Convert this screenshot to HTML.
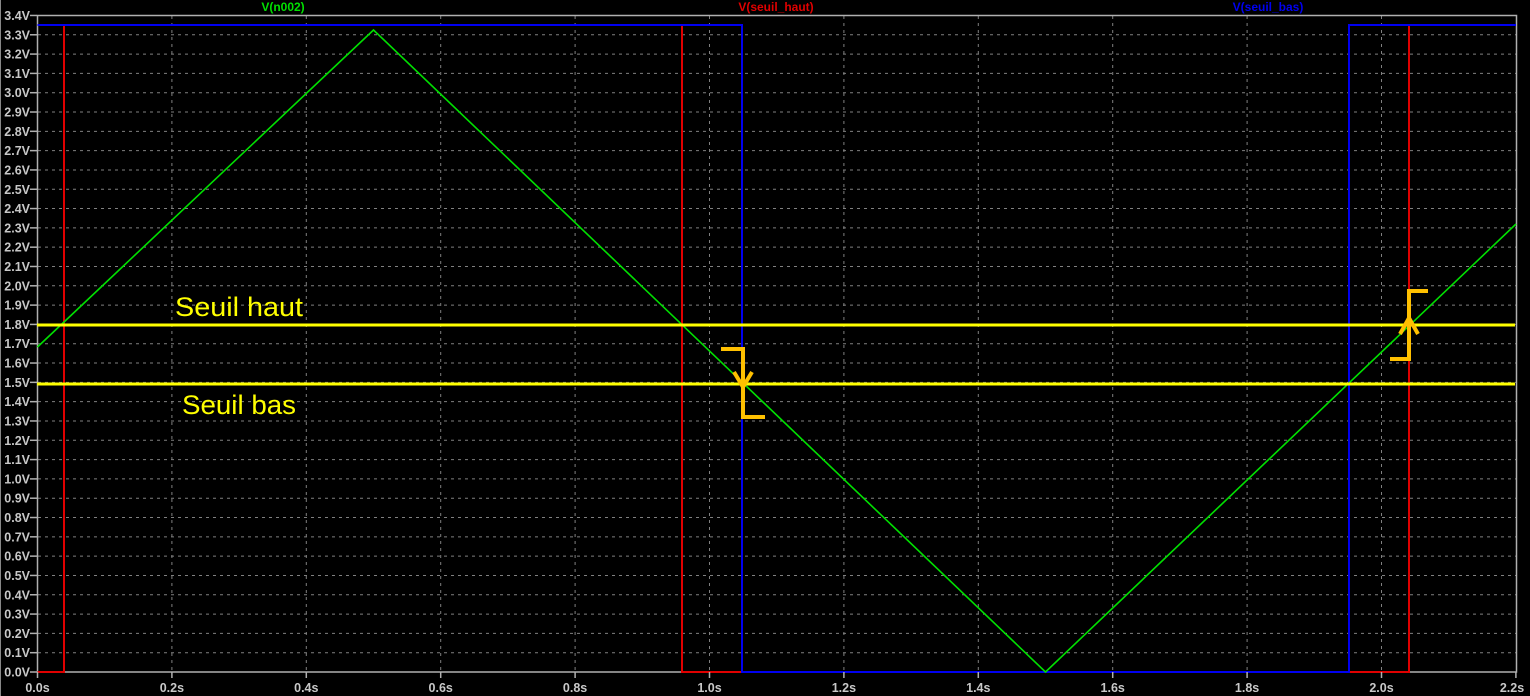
<!DOCTYPE html>
<html><head><meta charset="utf-8"><style>
html,body{margin:0;padding:0;background:#000;width:1530px;height:696px;overflow:hidden}
svg{display:block}
text{font-family:"Liberation Sans",Arial,sans-serif}
</style></head><body>
<svg width="1530" height="696" xmlns="http://www.w3.org/2000/svg">
<rect width="1530" height="696" fill="#000"/>
<line x1="0.5" y1="0" x2="0.5" y2="696" stroke="#888" stroke-width="1"/>
<g stroke="#808080" stroke-width="1" stroke-dasharray="3,4" fill="none" id="grid"></g>
<g id="ylab" font-size="12.5" font-weight="bold" fill="#c8c8c8" text-anchor="end"></g>
<g id="xlab" font-size="12.5" font-weight="bold" fill="#c8c8c8" text-anchor="middle"></g>
<rect x="37.5" y="15.5" width="1479" height="656.5" fill="none" stroke="#b0b0b0" stroke-width="1.5"/>
<text x="283" y="11" font-size="12" font-weight="bold" fill="#00e000" text-anchor="middle">V(n002)</text>
<text x="776" y="11" font-size="12" font-weight="bold" fill="#e00000" text-anchor="middle">V(seuil_haut)</text>
<text x="1268" y="11" font-size="12" font-weight="bold" fill="#0000f0" text-anchor="middle">V(seuil_bas)</text>
<path d="M37.5,672 H64 V25 H682 V672 H1409 V25 H1516" fill="none" stroke="#e00000" stroke-width="2"/>
<path d="M37.5,25 H742 V672 H1349 V25 H1516" fill="none" stroke="#0000f0" stroke-width="2"/>
<path d="M37.5,347 L373.5,30 L1045.5,672 L1516,224" fill="none" stroke="#00e000" stroke-width="1.6"/>
<line x1="37" y1="325" x2="1515" y2="325" stroke="#ffff00" stroke-width="3"/>
<line x1="37" y1="384" x2="1515" y2="384" stroke="#ffff00" stroke-width="3"/>
<text x="175" y="316" font-size="27" fill="#ffff00" textLength="128" lengthAdjust="spacingAndGlyphs">Seuil haut</text>
<text x="182" y="414" font-size="27" fill="#ffff00" textLength="114" lengthAdjust="spacingAndGlyphs">Seuil bas</text>
<g fill="none" stroke="#ffc000" stroke-width="4">
<path d="M721,349 H743 V417 H765"/>
<path d="M734,372 L743,387 L752,372"/>
<path d="M1428,291 H1409 V359 H1390"/>
<path d="M1400,334 L1409,318 L1418,334"/>
</g>
</svg>
<script>
(function(){
var ns="http://www.w3.org/2000/svg";
var g=document.getElementById('grid'),yl=document.getElementById('ylab'),xl=document.getElementById('xlab');
function el(p,n,a){var e=document.createElementNS(ns,n);for(var k in a)e.setAttribute(k,a[k]);p.appendChild(e);return e;}
var svg=document.querySelector('svg');
for(var i=0;i<=34;i++){
 var y=672-i*19.31;
 if(i>0&&i<34) el(g,'line',{x1:38,y1:y,x2:1516,y2:y});
 el(svg,'line',{x1:30,y1:y,x2:37,y2:y,stroke:'#b0b0b0','stroke-width':1.5});
 var t=el(yl,'text',{x:30,y:y+4.5});t.textContent=(i/10).toFixed(1)+'V';
}
for(var j=0;j<=11;j++){
 var x=37.5+j*134.4;
 if(j>0&&j<11) el(g,'line',{x1:x,y1:16,x2:x,y2:672});
 el(svg,'line',{x1:x,y1:672,x2:x,y2:678,stroke:'#b0b0b0','stroke-width':1.5});
 var t2=el(xl,'text',{x:(j==11?1512:x),y:692});t2.textContent=(j*0.2).toFixed(1)+'s';
}
svg.insertBefore(g,svg.children[2]);
})();
</script>
</body></html>
